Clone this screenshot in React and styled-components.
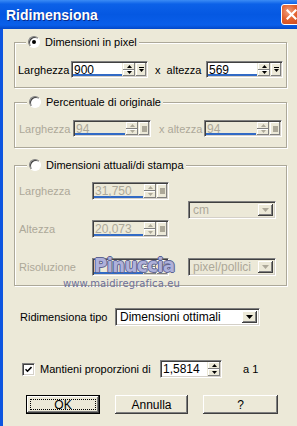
import React from "react";
import styled, { createGlobalStyle, css } from "styled-components";

const GlobalStyle = createGlobalStyle`
  html, body { margin: 0; padding: 0; }
  body {
    background: #ece9d8;
    font-family: "Liberation Sans", Arial, sans-serif;
    font-size: 11px;
    color: #000;
    overflow: hidden;
  }
`;

const Window = styled.div`
  width: 297px;
  height: 426px;
  display: flex;
  flex-direction: column;
  overflow: hidden;
  background: #ece9d8;
`;

const TitleBar = styled.div`
  height: 29px;
  flex: none;
  display: flex;
  align-items: center;
  padding-left: 6px;
  background: linear-gradient(180deg, #3b8cf5 0%, #0c61e8 14%, #0558e2 50%, #0a5fea 86%, #0348c9 100%);
`;

const Title = styled.span`
  color: #fff;
  font-weight: bold;
  font-size: 14px;
  text-shadow: 1px 1px 0 #0a2a8a;
`;

const CloseBtn = styled.div`
  margin-left: auto;
  margin-right: -5px;
  width: 21px;
  height: 21px;
  box-sizing: border-box;
  border: 1px solid #fff;
  border-radius: 3px;
  background: radial-gradient(circle at 35% 35%, #f0a080 0%, #e2622f 45%, #c9431a 100%);
  display: flex;
  align-items: center;
  justify-content: center;
`;

const Frame = styled.div`
  flex: 1;
  display: flex;
  border-left: 3px solid #0d55e0;
`;

const Body = styled.div`
  position: relative;
  flex: 1;
  display: flex;
  flex-direction: column;
  padding: 6px 10px 0 11px;
`;

const Group = styled.fieldset`
  margin: ${p => p.$mt}px 0 0;
  padding: ${p => p.$pt}px 0 ${p => p.$pb}px ${p => p.$pl}px;
  border: 1px solid #aca899;
  box-shadow: inset 1px 1px 0 #fff, 1px 1px 0 #fff;
  min-width: 0;
`;

const Legend = styled.legend`
  display: flex;
  align-items: center;
  gap: 5px;
  height: 14px;
  padding: 0 2px;
  margin-left: 8px;
  background: #ece9d8;
`;

const Radio = styled.span`
  width: 12px;
  height: 12px;
  box-sizing: border-box;
  border-radius: 50%;
  background: #fff;
  border: 1px solid;
  border-color: #808080 #fff #fff #808080;
  box-shadow: inset 1px 1px 0 #404040;
  display: flex;
  align-items: center;
  justify-content: center;
  &::after {
    content: "";
    width: 4px;
    height: 4px;
    border-radius: 50%;
    background: ${p => (p.$checked ? "#000" : "transparent")};
  }
`;

const Row = styled.div`
  display: flex;
  align-items: center;
`;

const Label = styled.span`
  width: ${p => p.$w}px;
  margin-left: ${p => p.$ml || 0}px;
  flex: none;
  white-space: pre;
  color: ${p => (p.$disabled ? "#aca899" : "#000")};
`;

const Field = styled.div`
  display: flex;
  flex: none;
  width: ${p => p.$w}px;
  height: ${p => p.$h}px;
  box-sizing: border-box;
  border: 1px solid;
  border-color: #808080 #fff #fff #808080;
  box-shadow: inset 1px 1px 0 #404040, inset -1px -1px 0 #d4d0c8;
  padding: 1px;
  gap: 1px;
  background: #ece9d8;
`;

const TextBox = styled.div`
  flex: 1;
  display: flex;
  align-items: center;
  padding-left: 1px;
  font-size: 12px;
  background: ${p => (p.$disabled ? "#ece9d8" : "#fff")};
  color: ${p => (p.$disabled ? "#aca899" : "#000")};
  ${p =>
    !p.$noLine &&
    css`
      box-shadow: inset 0 -2px 0 #316ac5;
    `}
`;

const Spin = styled.div`
  width: 12px;
  display: flex;
  flex-direction: column;
`;

const raised = css`
  background: #ece9d8;
  box-shadow: inset -1px -1px 0 #808080, inset 1px 1px 0 #fff;
`;

const SpinBtn = styled.div`
  flex: 1;
  ${raised}
  display: flex;
  align-items: center;
  justify-content: center;
`;

const DropBtn = styled.div`
  width: 10px;
  ${raised}
  display: flex;
  align-items: center;
  justify-content: center;
`;

const Select = styled.div`
  display: flex;
  flex: none;
  width: ${p => p.$w}px;
  height: ${p => p.$h}px;
  box-sizing: border-box;
  border: 1px solid;
  border-color: #808080 #fff #fff #808080;
  box-shadow: inset 1px 1px 0 #404040, inset -1px -1px 0 #d4d0c8;
  padding: 2px;
  background: ${p => (p.$disabled ? "#ece9d8" : "#fff")};
  grid-column: ${p => p.$col || "auto"};
  grid-row: ${p => p.$row || "auto"};
`;

const SelectText = styled.span`
  flex: 1;
  display: flex;
  align-items: center;
  padding-left: 2px;
  font-size: 12px;
  color: ${p => (p.$disabled ? "#aca899" : "#000")};
`;

const SelectBtn = styled.div`
  width: 15px;
  box-sizing: border-box;
  background: #ece9d8;
  box-shadow: inset -1px -1px 0 #404040, inset 1px 1px 0 #fff, inset -2px -2px 0 #808080;
  display: flex;
  align-items: center;
  justify-content: center;
`;

const PrintGrid = styled.div`
  display: grid;
  grid-template-columns: 73px 77px 19px 88px;
  grid-template-rows: repeat(5, 18px);
  row-gap: 1px;
  align-items: center;
`;

const Cell = styled.div`
  grid-column: ${p => p.$col};
  grid-row: ${p => p.$row};
  color: #aca899;
`;

const Watermark = styled.div`
  position: absolute;
  left: ${p => p.$x}px;
  top: ${p => p.$y}px;
  pointer-events: none;
  white-space: nowrap;
  ${p =>
    p.$big
      ? css`
          font-family: "DejaVu Sans Condensed", "DejaVu Sans", sans-serif;
          font-weight: bold;
          font-size: 20px;
          letter-spacing: -0.5px;
          color: #aeb1db;
          text-shadow: -1px 0 #5f6491, 1px 0 #5f6491, 0 -1px #5f6491, 0 1px #5f6491;
        `
      : css`
          font-family: "DejaVu Sans", sans-serif;
          font-size: 10px;
          letter-spacing: 0.1px;
          color: #6c7098;
        `}
`;

const TypeRow = styled(Row)`
  margin-top: 22px;
  padding-left: 6px;
`;

const CheckRow = styled(Row)`
  margin-top: 34px;
  padding-left: 8px;
`;

const Check = styled.span`
  width: 13px;
  height: 13px;
  flex: none;
  box-sizing: border-box;
  background: #fff;
  border: 1px solid;
  border-color: #808080 #fff #fff #808080;
  box-shadow: inset 1px 1px 0 #404040, inset -1px -1px 0 #d4d0c8;
  display: flex;
  align-items: center;
  justify-content: center;
  margin-right: 5px;
`;

const ButtonRow = styled(Row)`
  margin-top: 17px;
  padding-left: 12px;
  gap: 15px;
`;

const Button = styled.div`
  width: ${p => p.$w}px;
  height: 19px;
  box-sizing: border-box;
  display: flex;
  align-items: center;
  justify-content: center;
  font-size: 12px;
  background: #ece9d8;
  box-shadow: inset -1px -1px 0 #404040, inset 1px 1px 0 #fff, inset -2px -2px 0 #808080;
  ${p =>
    p.$default &&
    css`
      border: 1px solid #000;
      padding: 3px;
    `}
`;

const Focus = styled.span`
  flex: 1;
  align-self: stretch;
  display: flex;
  align-items: center;
  justify-content: center;
  border: 1px dotted #000;
`;

const Up = ({ c }) => (
  <svg width="5" height="3" viewBox="0 0 5 3"><path d="M2.5 0L5 3H0z" fill={c} /></svg>
);
const Down = ({ c }) => (
  <svg width="5" height="3" viewBox="0 0 5 3"><path d="M0 0h5L2.5 3z" fill={c} /></svg>
);

const DropGlyph = ({ disabled }) =>
  disabled ? (
    <svg width="5" height="6" viewBox="0 0 5 6"><rect width="5" height="6" fill="#aca899" /></svg>
  ) : (
    <svg width="5" height="6" viewBox="0 0 5 6">
      <rect x="0" y="0" width="5" height="1" fill="#000" />
      <path d="M0 2h5L2.5 5z" fill="#000" />
    </svg>
  );

const SpinField = ({ value, w, h = 17, disabled, drop = true, noLine }) => {
  const c = disabled ? "#aca899" : "#000";
  return (
    <Field $w={w} $h={h}>
      <TextBox $disabled={disabled} $noLine={noLine}>{value}</TextBox>
      <Spin>
        <SpinBtn><Up c={c} /></SpinBtn>
        <SpinBtn><Down c={c} /></SpinBtn>
      </Spin>
      {drop && (
        <DropBtn>
          <DropGlyph disabled={disabled} />
        </DropBtn>
      )}
    </Field>
  );
};

const Combo = ({ value, w, h = 18, disabled, col, row }) => (
  <Select $w={w} $h={h} $disabled={disabled} $col={col} $row={row}>
    <SelectText $disabled={disabled}>{value}</SelectText>
    <SelectBtn>
      <svg width="7" height="4" viewBox="0 0 7 4">
        <path d="M0 0h7L3.5 4z" fill={disabled ? "#aca899" : "#000"} />
      </svg>
    </SelectBtn>
  </Select>
);

export default function App() {
  return (
    <>
      <GlobalStyle />
      <Window>
        <TitleBar>
          <Title>Ridimensiona</Title>
          <CloseBtn>
            <svg width="11" height="11" viewBox="0 0 11 11">
              <path d="M1.5 1.5l8 8M9.5 1.5l-8 8" stroke="#fff" strokeWidth="2.2" strokeLinecap="square" />
            </svg>
          </CloseBtn>
        </TitleBar>
        <Frame>
          <Body>
            <Group $mt={0} $pt={12} $pb={9} $pl={3}>
              <Legend>
                <Radio $checked />
                Dimensioni in pixel
              </Legend>
              <Row>
                <Label $w={53}>Larghezza</Label>
                <SpinField value="900" w={77} />
                <Label $w={51} $ml={7}>x  altezza</Label>
                <SpinField value="569" w={77} />
              </Row>
            </Group>

            <Group $mt={7} $pt={11} $pb={10} $pl={4}>
              <Legend>
                <Radio />
                Percentuale di originale
              </Legend>
              <Row>
                <Label $w={54} $disabled>Larghezza</Label>
                <SpinField value="94" w={78} disabled />
                <Label $w={45} $ml={8} $disabled>x altezza</Label>
                <SpinField value="94" w={78} disabled />
              </Row>
            </Group>

            <Group $mt={10} $pt={10} $pb={9} $pl={4}>
              <Legend>
                <Radio />
                Dimensioni attuali/di stampa
              </Legend>
              <PrintGrid>
                <Cell $col={1} $row={1}>Larghezza</Cell>
                <Cell $col={2} $row={1}><SpinField value="31,750" w={77} h={18} disabled /></Cell>
                <Combo value="cm" w={88} col={4} row={2} disabled />
                <Cell $col={1} $row={3}>Altezza</Cell>
                <Cell $col={2} $row={3}><SpinField value="20,073" w={77} h={18} disabled /></Cell>
                <Cell $col={1} $row={5}>Risoluzione</Cell>
                <Cell $col={2} $row={5}><SpinField value="" w={77} h={18} disabled /></Cell>
                <Combo value="pixel/pollici" w={88} col={4} row={5} disabled />
              </PrintGrid>
            </Group>

            <Watermark $big $x={91} $y={224}>Pinuccia</Watermark>
            <Watermark $x={60} $y={249}>www.maidiregrafica.eu</Watermark>

            <TypeRow>
              <Label $w={95}>Ridimensiona tipo</Label>
              <Combo value="Dimensioni ottimali" w={145} />
            </TypeRow>

            <CheckRow>
              <Check>
                <svg width="7" height="7" viewBox="0 0 7 7">
                  <path d="M0.5 3.2l2 2 4-4.2" stroke="#000" strokeWidth="1.6" fill="none" />
                </svg>
              </Check>
              <Label $w={120}>Mantieni proporzioni di</Label>
              <SpinField value="1,5814" w={62} h={18} drop={false} noLine />
              <Label $w={20} $ml={21}>a 1</Label>
            </CheckRow>

            <ButtonRow>
              <Button $w={74} $default>
                <Focus>OK</Focus>
              </Button>
              <Button $w={73}>Annulla</Button>
              <Button $w={75}>?</Button>
            </ButtonRow>
          </Body>
        </Frame>
      </Window>
    </>
  );
}
